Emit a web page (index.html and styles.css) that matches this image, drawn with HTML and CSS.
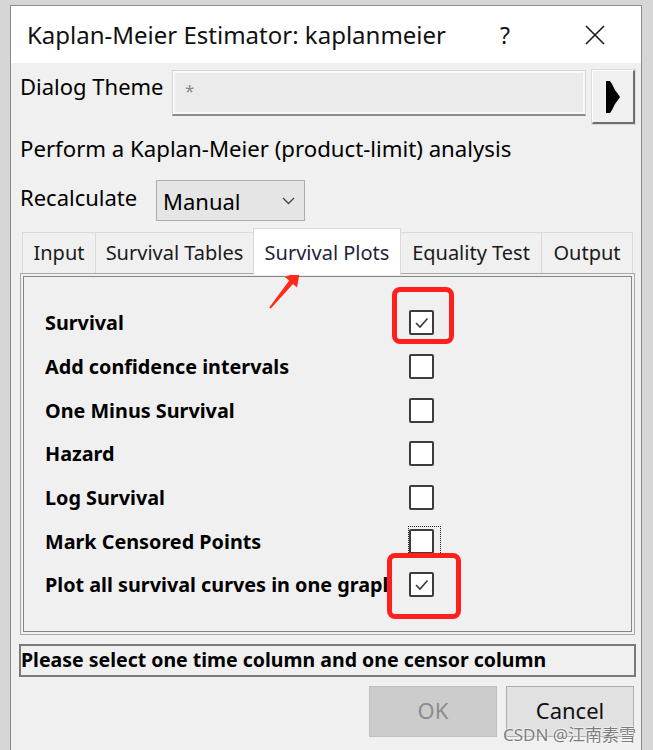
FILE: index.html
```html
<!DOCTYPE html>
<html>
<head>
<meta charset="utf-8">
<link rel="stylesheet" href="styles.css">
</head>
<body>
<div class="window">
  <div class="titlebar">
    <span class="title">Kaplan-Meier Estimator: kaplanmeier</span>
    <span class="help">?</span>
    <span class="close"><svg width="20" height="20" viewBox="0 0 20 20"><path d="M1 1 L19 19 M19 1 L1 19" stroke="#1a1a1a" stroke-width="1.6" fill="none"/></svg></span>
  </div>
  <div class="content">
    <div class="theme-row">
      <span class="theme-label">Dialog Theme</span>
      <div class="theme-input"><span class="star">*</span></div>
      <div class="theme-btn"><svg width="14" height="32" viewBox="0 0 14 32"><path d="M0 0 L4 0 L6 3 L9 9 L12 13 L14 16 L12 19 L9 23 L6 29 L4 32 L0 32 Z" fill="#000"/></svg></div>
    </div>
    <div class="desc">Perform a Kaplan-Meier (product-limit) analysis</div>
    <div class="recalc-row">
      <span class="recalc-label">Recalculate</span>
      <div class="select"><span class="select-text">Manual</span><svg class="chev" width="13" height="8" viewBox="0 0 13 8"><path d="M1 1 L6.5 6.5 L12 1" stroke="#444" stroke-width="1.3" fill="none"/></svg></div>
    </div>
    <div class="tabs">
      <div class="tab tab-input">Input</div>
      <div class="tab tab-tables">Survival Tables</div>
      <div class="tab tab-plots selected">Survival Plots</div>
      <div class="tab tab-equality">Equality Test</div>
      <div class="tab tab-output">Output</div>
    </div>
    <div class="panel">
      <div class="panel-inner">
        <div class="opt"><span class="opt-label">Survival</span><span class="cb"><svg width="21" height="21" viewBox="0 0 21 21"><path d="M5 11 L9 15 L16.5 6.5" stroke="#3a3a3a" stroke-width="1.6" fill="none"/></svg></span></div>
        <div class="opt"><span class="opt-label">Add confidence intervals</span><span class="cb"></span></div>
        <div class="opt"><span class="opt-label">One Minus Survival</span><span class="cb"></span></div>
        <div class="opt"><span class="opt-label">Hazard</span><span class="cb"></span></div>
        <div class="opt"><span class="opt-label">Log Survival</span><span class="cb"></span></div>
        <div class="opt"><span class="opt-label">Mark Censored Points</span><span class="cb"><span class="focus"></span></span></div>
        <div class="opt"><span class="opt-label">Plot all survival curves in one graph</span><span class="cb"><svg width="21" height="21" viewBox="0 0 21 21"><path d="M5 11 L9 15 L16.5 6.5" stroke="#3a3a3a" stroke-width="1.6" fill="none"/></svg></span></div>
      </div>
    </div>
    <div class="status">Please select one time column and one censor column</div>
    <div class="buttons">
      <div class="btn ok">OK</div>
      <div class="btn cancel">Cancel</div>
    </div>
  </div>
</div>
<div class="mark mark-top"></div>
<div class="mark mark-bottom"></div>
<svg class="arrow" width="653" height="750" viewBox="0 0 653 750"><polygon points="300,271 297,287.5 293,284 270.8,308.6 269.2,307.4 289.2,280.4 284.8,277" fill="#ff2a1a"/></svg>
<div class="watermark">CSDN @江南素雪</div>
</body>
</html>
```
FILE: styles.css
```css
* { box-sizing: border-box; }
html, body { margin: 0; padding: 0; }
body {
  width: 653px;
  height: 750px;
  overflow: hidden;
  position: relative;
  background: #d6d6d6;
  font-family: "Noto Sans", "Open Sans", sans-serif;
  color: #000;
}
.window {
  margin: 5px 0 0 10px;
  width: 632px;
  height: 760px;
  border: 1px solid #8a8a8a;
  border-bottom: none;
  background: #f0f0f0;
}
.titlebar {
  height: 57px;
  background: #fff;
  display: flex;
  align-items: center;
  padding-left: 16px;
}
.title { flex: 1; font-size: 24px; white-space: nowrap; color: #111; }
.help { width: 56px; text-align: center; font-size: 23px; color: #111; }
.close { width: 70px; margin-left: 27px; margin-right: 11px; display: flex; justify-content: center; }

.content { padding: 0 5px 0 8px; }

.theme-row { margin-top: 7px; display: flex; align-items: flex-start; }
.theme-label { width: 153px; padding-left: 1px; font-size: 22px; line-height: 32px; white-space: nowrap; }
.theme-input {
  width: 414px;
  height: 46px;
  background: #ebebeb;
  border: 1px solid #d4d4d4;
  border-bottom: 2px solid #8c8c8c;
  box-shadow: inset 0 0 0 2px #f9f9f9;
  padding: 8px 0 0 12px;
}
.star { color: #8a8a8a; font-size: 17px; }
.theme-btn {
  margin-left: 6px;
  width: 43px;
  height: 54px;
  background: #f0f0f0;
  border-top: 1px solid #fdfdfd;
  border-left: 1px solid #fdfdfd;
  border-right: 2px solid #6e6e6e;
  border-bottom: 2px solid #6e6e6e;
  box-shadow: 0 0 0 1px #dcdcdc;
  display: flex;
  align-items: center;
  padding-left: 13px;
}

.desc { margin-top: 10px; padding-left: 1px; font-size: 22.2px; line-height: 30px; white-space: nowrap; }

.recalc-row { margin-top: 16px; display: flex; align-items: flex-start; }
.recalc-label { width: 137px; padding-left: 1px; font-size: 22px; line-height: 35px; }
.select {
  width: 149px;
  height: 41px;
  background: #e5e5e5;
  border: 1px solid #adadad;
  display: flex;
  align-items: center;
  padding-left: 6px;
}
.select-text { flex: 1; font-size: 22px; line-height: 39px; padding-top: 2px; }
.chev { margin-right: 9px; }

.tabs {
  margin-top: 7px;
  margin-left: 3px;
  height: 45px;
  display: flex;
  align-items: flex-end;
  position: relative;
  z-index: 1;
}
.tab {
  height: 41px;
  line-height: 39px;
  font-size: 20px;
  text-align: center;
  white-space: nowrap;
  background: #f0f0f0;
  border-top: 1px solid #d9d9d9;
  border-left: 1px solid #d9d9d9;
  color: #1a1a1a;
}
.tab-input { width: 73px; }
.tab-tables { width: 158px; }
.tab-plots { width: 148px; }
.tab-equality { width: 140px; border-left: none; }
.tab-output { width: 92px; border-right: 1px solid #d9d9d9; }
.tab.selected {
  height: 47px;
  margin-bottom: -2px;
  padding-top: 4px;
  background: #fff;
  border: 1px solid #d9d9d9;
  border-bottom: none;
  color: #23233a;
}

.panel {
  margin: 0 1px;
  height: 362px;
  border: 1px solid #a9a9a9;
  padding: 2px;
}
.panel-inner {
  height: 100%;
  border: 1px solid #858585;
  padding: 24px 0 0 21px;
}
.opt { height: 43.7px; display: flex; align-items: center; }
.opt-label {
  width: 347px;
  overflow: hidden;
  white-space: nowrap;
  font-size: 19.8px;
  font-weight: bold;
}
.cb {
  position: relative;
  margin-left: 17px;
  width: 25px;
  height: 25px;
  background: #fff;
  border: 2px solid #3c3c3c;
  border-radius: 2px;
}
.cb svg { display: block; }
.focus {
  position: absolute;
  left: -3px;
  top: -5px;
  width: 33px;
  height: 31px;
  border: 1px dotted #222;
}

.status {
  margin-top: 9px;
  height: 33px;
  border: 2px solid #7a7a7a;
  font-size: 19.5px;
  font-weight: bold;
  line-height: 28px;
  white-space: nowrap;
  overflow: hidden;
}

.buttons {
  margin-top: 9px;
  display: flex;
  justify-content: flex-end;
  gap: 9px;
  padding-right: 2px;
}
.btn {
  width: 128px;
  height: 51px;
  font-size: 22px;
  line-height: 47px;
  text-align: center;
}
.ok { background: #cccccc; border: 1px solid #bfbfbf; color: #8c8c8c; }
.cancel { background: #e1e1e1; border: 1px solid #adadad; color: #111; }

.mark {
  position: absolute;
  border: 5px solid #ff1f1f;
  border-radius: 8px;
}
.mark-top { left: 392px; top: 287px; width: 62px; height: 57px; }
.mark-bottom { left: 387px; top: 553px; width: 74px; height: 66px; }
.arrow { position: absolute; left: 0; top: 0; pointer-events: none; }

.watermark {
  position: absolute;
  left: 503px;
  top: 721px;
  font-family: "Noto Sans", "Noto Sans CJK SC", sans-serif;
  font-size: 17px;
  color: #7d7d7d;
  text-shadow: 0 0 2px #fff, 0 0 2px #fff;
  white-space: nowrap;
}
```
